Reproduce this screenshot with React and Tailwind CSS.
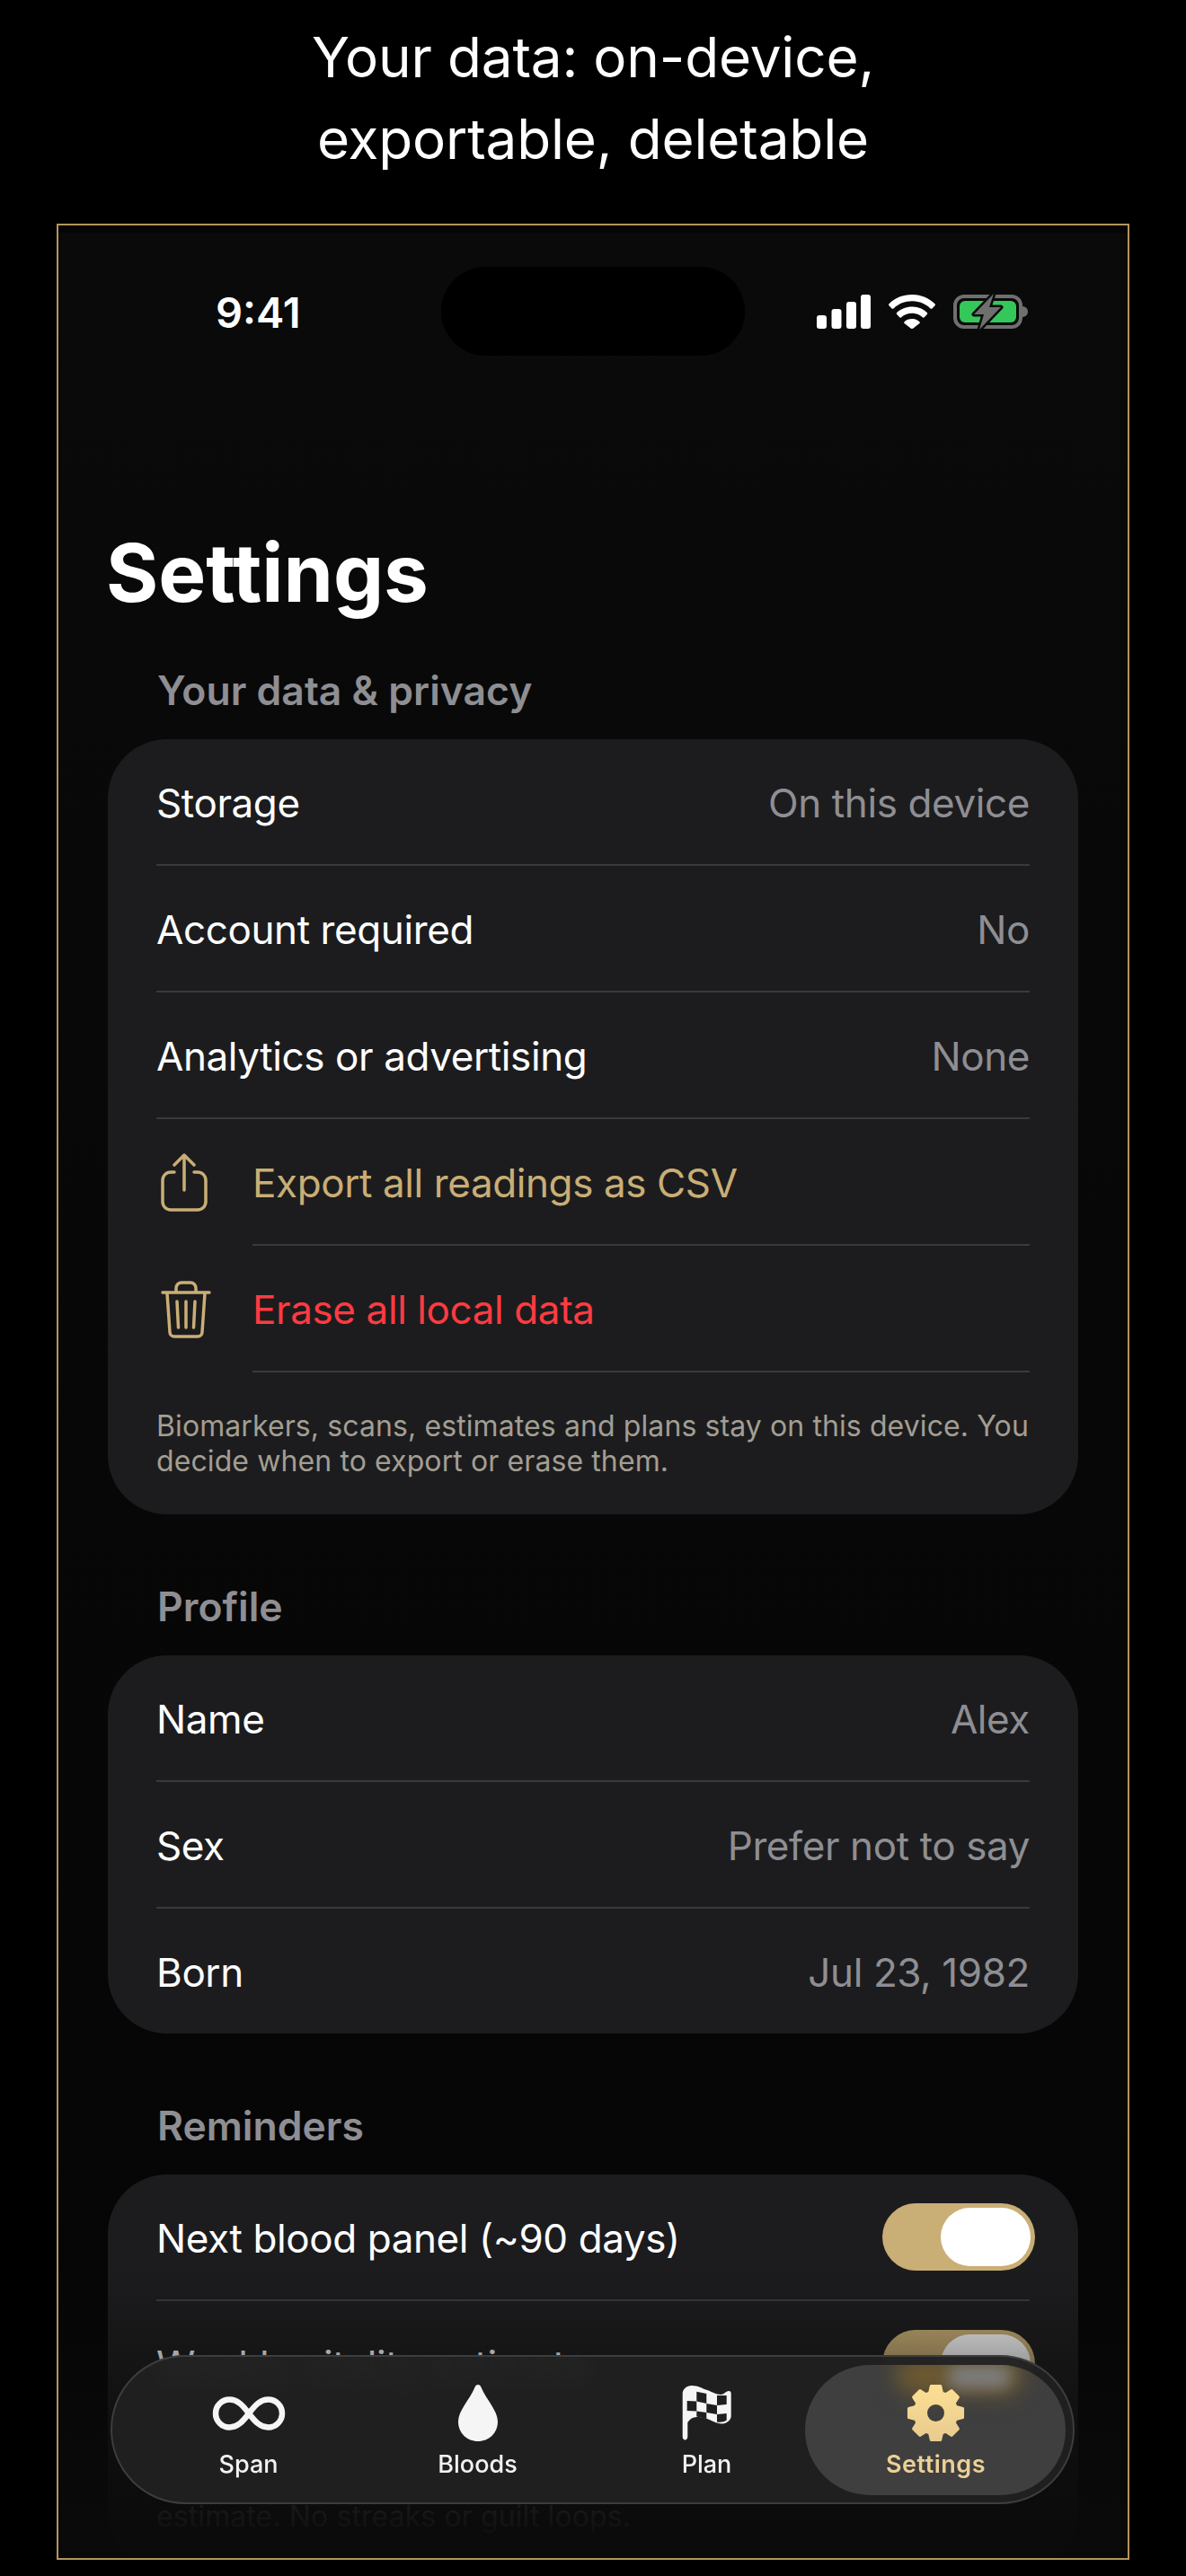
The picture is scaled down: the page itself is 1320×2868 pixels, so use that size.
import React from 'react';

const font = { fontFamily: 'Inter, "Liberation Sans", sans-serif' };

const gearPoints = () => {
  const pts = [];
  for (let i = 0; i < 8; i++) {
    const a = (i * Math.PI) / 4 - Math.PI / 2;
    const at = (r, d) => `${(32.5 + r * Math.cos(a + d)).toFixed(2)} ${(32.5 + r * Math.sin(a + d)).toFixed(2)}`;
    pts.push(at(23.5, -0.3), at(30.5, -0.17), at(30.5, 0.17), at(23.5, 0.3));
  }
  return 'M' + pts.join('L') + 'Z';
};

const StatusIcons = () => (
  <div className="flex items-center gap-[20px]">
    <svg width="60" height="38" viewBox="0 0 60 38" fill="#fff">
      <rect x="0" y="23" width="11" height="15" rx="3" />
      <rect x="16.5" y="16" width="11" height="22" rx="3" />
      <rect x="33" y="8" width="11" height="30" rx="3" />
      <rect x="49" y="0" width="11" height="38" rx="3" />
    </svg>
    <svg width="52" height="38" viewBox="0 0 52 38" fill="#fff">
      <path d="M26 0C16 0 7.5 3.6 0.5 10.2c-.6.6-.6 1.4 0 2l3 3.2c.6.6 1.4.6 2 0C11 10.200 18 7.300 26 7.300s15 2.900 20.500 8.100c.6.6 1.400.6 2 0l3-3.200c.6-.6.6-1.400 0-2C44.500 3.600 36 0 26 0z" />
      <path d="M26 13.500c-6.500 0-12.300 2.400-16.800 6.500-.6.6-.6 1.400 0 2l3 3.200c.6.6 1.400.6 2 0 3.100-2.700 7.200-4.400 11.800-4.400s8.700 1.700 11.800 4.400c.6.6 1.400.6 2 0l3-3.200c.6-.6.6-1.400 0-2-4.500-4.100-10.300-6.500-16.800-6.500z" />
      <path d="M26 27c-3.300 0-6.200 1.200-8.400 3.200-.6.6-.6 1.300 0 1.900l7 5.400c.8.700 2 .7 2.800 0l7-5.400c.6-.6.6-1.300 0-1.900C32.200 28.200 29.300 27 26 27z" />
    </svg>
    <svg width="84" height="42" viewBox="0 0 84 42">
      <rect x="2" y="4" width="73" height="34" rx="10" fill="none" stroke="#6f6f6f" strokeWidth="4" />
      <rect x="7" y="9" width="63" height="24" rx="6" fill="#34c759" />
      <path d="M77 15c4 .5 6 3 6 6s-2 5.500-6 6z" fill="#6f6f6f" />
      <path d="M45 1 L23 24 H34 L29 41 L53 16 H40 Z" fill="#6f6f6f" stroke="#0a0a0a" strokeWidth="5" strokeLinejoin="round" paintOrder="stroke" />
    </svg>
  </div>
);

const ShareIcon = () => (
  <svg width="52" height="65" viewBox="0 0 52 65" fill="none" stroke="#c9ae75" strokeWidth="3.5" strokeLinecap="round" strokeLinejoin="round">
    <path d="M15 21H11a9 9 0 0 0-9 9V54a9 9 0 0 0 9 9H41a9 9 0 0 0 9-9V30a9 9 0 0 0-9-9H37" />
    <path d="M26 41V2M15 13L26 2L37 13" />
  </svg>
);

const TrashIcon = () => (
  <svg width="56" height="64" viewBox="0 0 56 64" fill="none" stroke="#c9ae75" strokeWidth="3.5" strokeLinecap="round" strokeLinejoin="round">
    <path d="M2 13H54" />
    <path d="M17 12V8a6 6 0 0 1 6-6H33a6 6 0 0 1 6 6V12" />
    <path d="M7 14L10 57a5 5 0 0 0 5 5H41a5 5 0 0 0 5-5L49 14" />
    <path d="M18 23L19.500 52M28 23V52M38 23L36.500 52" />
  </svg>
);

const InfinityIcon = () => (
  <svg width="82" height="38" viewBox="0 0 82 38" fill="none" stroke="#f5f5f5" strokeWidth="6.500">
    <path d="M41 19C34 9.500 28 3.500 19.500 3.500a15.500 15.500 0 0 0 0 31C28 34.500 34 28.500 41 19C48 9.500 54 3.500 62.500 3.500a15.500 15.500 0 0 1 0 31C54 34.500 48 28.500 41 19Z" />
  </svg>
);

const DropIcon = () => (
  <svg width="44" height="63" viewBox="0 0 44 63" fill="#f5f5f5">
    <path d="M22 0C24 0 25 1.500 26 4C31 16 44 29 44 41C44 54 34 63 22 63C10 63 0 54 0 41C0 29 13 16 18 4C19 1.500 20 0 22 0Z" />
  </svg>
);

const FlagIcon = () => (
  <svg width="55" height="61" viewBox="0 0 55 61">
    <path
      fill="#f5f5f5"
      d="M0.700 9C0.700 4 5 0 11 0C18 0 22 3 28 5C34 7 38 10 43 10C47 10 49 6 52 6C54 6 54.700 7 54.700 9V34C54.700 38 50 42.500 44.700 42.500C38 42.500 33 38.500 28 37C24 35.500 20 35 16.300 35C12 35 9 37 6.300 41V57C6.300 59 5 60.500 3.500 60.500C2 60.500 0.700 59 0.700 57Z"
    />
    <g fill="#1f1f1f">
      <path d="M16.300 6.700L27.300 9V20L16.300 17.500Z" />
      <path d="M39 11L49.700 11V21L39 22Z" />
      <path d="M5.700 17L16.300 17.500V28.500L5.700 28Z" />
      <path d="M27.300 20L39 22V32L27.300 30Z" />
      <path d="M16.300 28.500L27.300 30V37L16.300 34.500Z" />
      <path d="M39 32L49.700 31V38.500C47 40.500 43 41 39 40.500Z" />
    </g>
  </svg>
);

const GearIcon = () => (
  <svg width="65" height="65" viewBox="0 0 65 65">
    <defs>
      <linearGradient id="gearFill" x1="0" y1="0" x2="0" y2="1">
        <stop offset="0" stopColor="#fddf92" />
        <stop offset="1" stopColor="#e8cb8f" />
      </linearGradient>
    </defs>
    <path
      d={gearPoints() + 'M32.500 21.500a11 11 0 1 0 0 22a11 11 0 1 0 0-22Z'}
      fill="url(#gearFill)"
      fillRule="evenodd"
      stroke="url(#gearFill)"
      strokeWidth="3"
      strokeLinejoin="round"
    />
  </svg>
);

const Toggle = () => (
  <div className="flex h-[75px] w-[170px] -mr-[6px] items-center justify-end rounded-full bg-[#c9ae75] pr-[5px] shrink-0">
    <div className="h-[65px] w-[100px] rounded-full bg-white" />
  </div>
);

const rowText = 'pt-[3px] text-[44px] tracking-[-0.4px]';

const Row = ({ label, value, last }) => (
  <div className={`flex h-[139px] items-center justify-between ${last ? '' : 'box-content border-b-2 border-[#3a3a3c]'}`}>
    <span className={`${rowText} text-white`}>{label}</span>
    <span className={`${rowText} text-[#8e8e93]`}>{value}</span>
  </div>
);

const ToggleRow = ({ label }) => (
  <div className="box-content flex h-[139px] items-center justify-between border-b-2 border-[#3a3a3c]">
    <span className={`${rowText} text-white`}>{label}</span>
    <Toggle />
  </div>
);

const ActionRow = ({ icon, label, color }) => (
  <div className="flex items-center">
    <div className="flex w-[107px] shrink-0 pl-[5px]">{icon}</div>
    <div className="box-content flex h-[139px] flex-1 items-center border-b-2 border-[#3a3a3c]">
      <span className={`${rowText} ${color}`}>{label}</span>
    </div>
  </div>
);

const SectionLabel = ({ children, className }) => (
  <div className={`pl-[110px] text-[44.5px] leading-[50px] font-semibold text-[#8e8e93] ${className}`}>{children}</div>
);

const Note = ({ children }) => (
  <p className="py-[40px] text-[32px] leading-[39px] tracking-[0.1px] text-[#a39e93]">{children}</p>
);

const Tab = ({ icon, label, active }) => (
  <div className="relative flex w-[255px] flex-col items-center pt-[31px]">
    <div className="flex h-[63px] items-center justify-center">{icon}</div>
    <span className={`mt-[10px] text-[27px] leading-[32px] ${active ? 'font-semibold tracking-[0.5px] text-[#ecd095]' : 'font-medium text-[#f2f2f2]'}`}>{label}</span>
  </div>
);

export default function App() {
  return (
    <div className="h-[2868px] overflow-hidden bg-black" style={font}>
      <div className="pt-[18px] text-center text-[62px] leading-[91px] tracking-[-0.18px] text-white">
        <div>Your data: on-device,</div>
        <div>exportable, deletable</div>
      </div>

      <div className="relative mx-[63px] mt-[49px] h-[2601px] overflow-hidden border-2 border-[#b3965c] bg-linear-to-b from-[#0a0a0a] to-[#050505]">
        <div className="h-[8px] bg-[#050505]" />

        <div className="mt-[38px] flex h-[99px] items-center">
          <div className="w-[426px] shrink-0 pt-[3px] pl-[175px] text-[47px] font-semibold text-white">9:41</div>
          <div className="h-[99px] w-[338px] rounded-full bg-black" />
          <div className="flex flex-1 justify-end pr-[110px]">
            <StatusIcons />
          </div>
        </div>

        <div className="mt-[192px] pl-[53px] text-[89px] leading-[100px] font-bold text-white">Settings</div>

        <SectionLabel className="mt-[56px] mb-[29px]">Your data &amp; privacy</SectionLabel>
        <div className="mx-[55px] rounded-[66px] bg-[#1c1c1e] px-[54px]">
          <Row label="Storage" value="On this device" />
          <Row label="Account required" value="No" />
          <Row label="Analytics or advertising" value="None" />
          <ActionRow icon={<ShareIcon />} label="Export all readings as CSV" color="text-[#c9ae75]" />
          <ActionRow icon={<TrashIcon />} label="Erase all local data" color="text-[#ff3b41]" />
          <Note>Biomarkers, scans, estimates and plans stay on this device. You decide when to export or erase them.</Note>
        </div>

        <SectionLabel className="mt-[78px] mb-[29px]">Profile</SectionLabel>
        <div className="mx-[55px] rounded-[66px] bg-[#1c1c1e] px-[54px]">
          <Row label="Name" value="Alex" />
          <Row label="Sex" value="Prefer not to say" />
          <Row label="Born" value="Jul 23, 1982" last />
        </div>

        <SectionLabel className="mt-[78px] mb-[29px]">Reminders</SectionLabel>
        <div className="mx-[55px] rounded-[66px] bg-[#1c1c1e] px-[54px]">
          <ToggleRow label="Next blood panel (~90 days)" />
          <ToggleRow label="Weekly vitality estimate" />
          <Note>
            A gentle nudge for your next panel and the weekly vitality
            <br />
            estimate. No streaks or guilt loops.
          </Note>
        </div>

        {/* fade under the tab bar */}
        <div className="absolute inset-x-0 bottom-0 h-[320px] bg-linear-to-b from-[#0a0a0a00] via-[#0a0a0ac0] via-60% to-[#0a0a0af4] to-90%" />

        <div className="absolute bottom-[60px] left-[58px] flex h-[166px] w-[1073px] rounded-full border-2 border-[#3d3d3d] bg-[#202020f5] px-[24px] backdrop-blur-sm">
          <div className="absolute top-[9px] right-[8px] h-[145px] w-[290px] overflow-hidden rounded-full bg-[#3f3f3f]">
            <div className="absolute -top-[10px] left-[100px] h-[42px] w-[143px] rounded-full bg-[#6e5a30] blur-[12px]" />
            <div className="absolute top-0 left-[159px] h-[26px] w-[70px] rounded-full bg-[#7c7c7c] blur-[8px]" />
          </div>
          <Tab icon={<InfinityIcon />} label="Span" />
          <Tab icon={<DropIcon />} label="Bloods" />
          <Tab icon={<FlagIcon />} label="Plan" />
          <Tab icon={<GearIcon />} label="Settings" active />
        </div>
      </div>
    </div>
  );
}
